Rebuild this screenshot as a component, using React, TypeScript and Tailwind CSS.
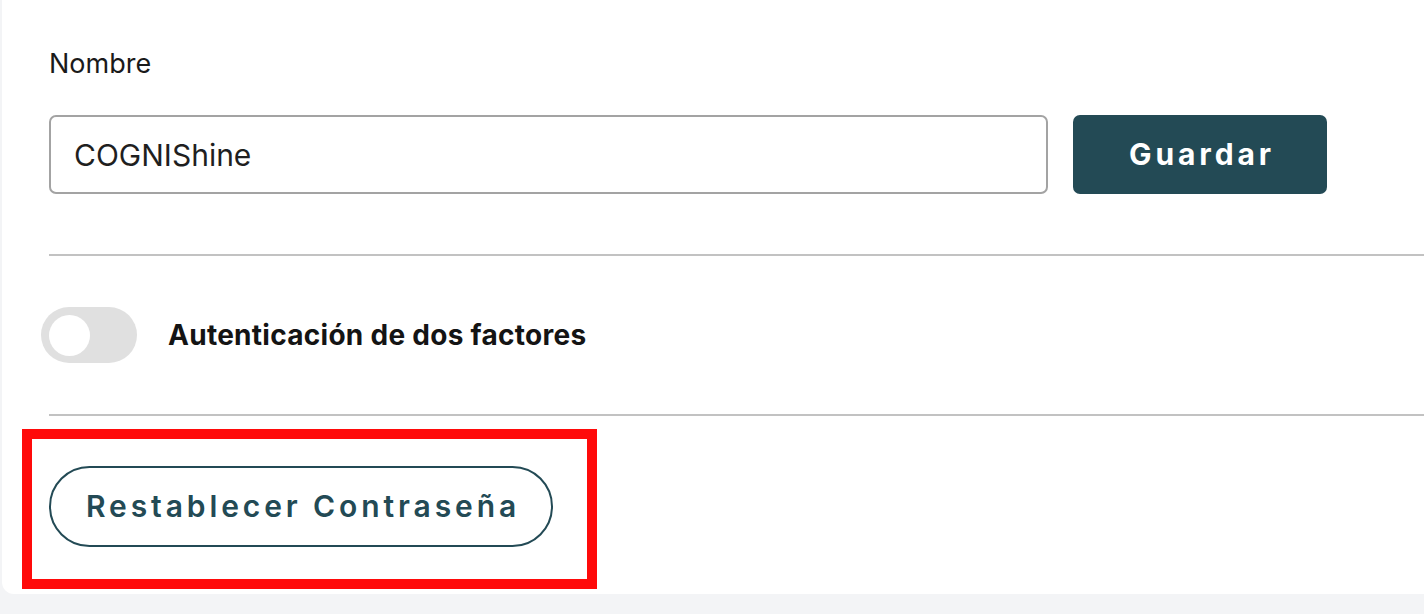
import { useState } from "react";

const TEAL = "#234a55";

export default function App() {
  const [name, setName] = useState("COGNIShine");
  const [twoFactor, setTwoFactor] = useState(false);

  return (
    <div className="h-[614px] w-full overflow-hidden bg-[#f3f4f6] pl-[2px] font-['Inter','Liberation_Sans',sans-serif]">
      <div className="relative h-[594px] rounded-bl-xl bg-white">
        <div className="pl-[47px] pt-[49px]">
          <label className="block text-[27px] leading-[30px] text-[#1a1a1a]">Nombre</label>

          <div className="mt-[36px] flex items-center gap-[25px]">
            <input
              value={name}
              onChange={e => setName(e.target.value)}
              className="h-[79px] w-[999px] rounded-[7px] border-2 border-[#a3a3a3] px-[23px] text-[30px] text-[#1f1f1f] outline-none"
            />
            <button
              className="h-[79px] w-[254px] rounded-[7px] pl-[4px] text-[30px] font-bold tracking-[0.13em] text-white"
              style={{ backgroundColor: TEAL }}
            >
              Guardar
            </button>
          </div>

          <div className="mt-[60px] h-[2px] bg-[#c2c2c2]" />

          <div className="flex h-[158px] items-center">
            <button
              onClick={() => setTwoFactor(v => !v)}
              className={`-ml-[8px] flex h-[56px] w-[96px] items-center rounded-full px-[8px] ${twoFactor ? "justify-end bg-[#234a55]" : "justify-start bg-[#e0e0e0]"}`}
            >
              <span className="h-[41px] w-[41px] rounded-full bg-white" />
            </button>
            <span className="ml-[31px] text-[28px] font-bold tracking-[0.01em] text-[#141414]">Autenticación de dos factores</span>
          </div>

          <div className="h-[2px] bg-[#c2c2c2]" />

          <div className="mt-[50px]">
            <button
              className="flex h-[81px] w-[504px] items-center justify-center rounded-full border-2 pl-[4px] text-[30px] font-semibold tracking-[0.13em]"
              style={{ borderColor: TEAL, color: TEAL }}
            >
              Restablecer Contraseña
            </button>
          </div>
        </div>

        {/* annotation frame */}
        <div className="pointer-events-none absolute left-[20px] top-[429px] h-[160px] w-[575px] border-[10px] border-[#ff0a0a]" />
      </div>
    </div>
  );
}
